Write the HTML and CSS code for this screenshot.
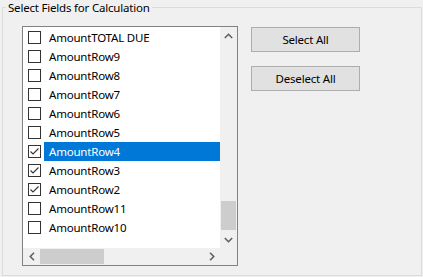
FILE: index.html
```html
<!DOCTYPE html>
<html lang="en">
<head>
    <meta charset="UTF-8">
    <title>Select Fields for Calculation</title>
    <link rel="stylesheet" href="styles.css">
</head>
<body>
    <fieldset class="group">
        <legend class="group-title">Select Fields for Calculation</legend>
        <div class="group-body">
            <div class="listbox">
                <ul class="items">
                    <li class="item"><span class="check"></span><span class="label">AmountTOTAL DUE</span></li>
                    <li class="item"><span class="check"></span><span class="label">AmountRow9</span></li>
                    <li class="item"><span class="check"></span><span class="label">AmountRow8</span></li>
                    <li class="item"><span class="check"></span><span class="label">AmountRow7</span></li>
                    <li class="item"><span class="check"></span><span class="label">AmountRow6</span></li>
                    <li class="item"><span class="check"></span><span class="label">AmountRow5</span></li>
                    <li class="item selected"><span class="check checked"><svg width="11" height="11" viewBox="0 0 11 11"><polyline points="1.5,5.5 4,8 9.5,2.5" /></svg></span><span class="label">AmountRow4</span></li>
                    <li class="item"><span class="check checked"><svg width="11" height="11" viewBox="0 0 11 11"><polyline points="1.5,5.5 4,8 9.5,2.5" /></svg></span><span class="label">AmountRow3</span></li>
                    <li class="item"><span class="check checked"><svg width="11" height="11" viewBox="0 0 11 11"><polyline points="1.5,5.5 4,8 9.5,2.5" /></svg></span><span class="label">AmountRow2</span></li>
                    <li class="item"><span class="check"></span><span class="label">AmountRow11</span></li>
                    <li class="item"><span class="check"></span><span class="label">AmountRow10</span></li>
                </ul>
                <div class="vscroll">
                    <span class="arrow"><svg width="9" height="6" viewBox="0 0 9 6"><polyline points="0.8,5 4.5,1.3 8.2,5" /></svg></span>
                    <span class="track"><span class="thumb"></span></span>
                    <span class="arrow"><svg width="9" height="6" viewBox="0 0 9 6"><polyline points="0.8,1 4.5,4.7 8.2,1" /></svg></span>
                </div>
                <div class="hscroll">
                    <span class="arrow"><svg width="6" height="9" viewBox="0 0 6 9"><polyline points="5,0.8 1.3,4.5 5,8.2" /></svg></span>
                    <span class="track"><span class="thumb"></span></span>
                    <span class="arrow"><svg width="6" height="9" viewBox="0 0 6 9"><polyline points="1,0.8 4.7,4.5 1,8.2" /></svg></span>
                </div>
                <div class="corner"></div>
            </div>
            <div class="actions">
                <button type="button">Select All</button>
                <button type="button">Deselect All</button>
            </div>
        </div>
    </fieldset>
</body>
</html>
```

FILE: styles.css
```css
body {
    margin: 0;
    background-color: #f0f0f0;
    font-family: "Noto Sans", Arial, sans-serif;
    font-size: 11.5px;
    letter-spacing: -0.2px;
    color: #000;
}
.group {
    box-sizing: border-box;
    height: 276px;
    margin: 0 1px 1px 2px;
    padding: 0;
    border: 1px solid #dcdcdc;
}
.group-title {
    margin-left: 3px;
    padding: 0 2px;
    line-height: 15px;
}
.group-body {
    display: flex;
    align-items: flex-start;
    gap: 13px;
    padding: 11px 0 0 19px;
}
.listbox {
    display: grid;
    grid-template-columns: 197px 17px;
    grid-template-rows: 221px 17px;
    border: 1px solid #828282;
    background: #fff;
}
.items {
    list-style: none;
    margin: 0;
    padding: 1px 0 0 0;
    overflow: hidden;
}
.item {
    display: flex;
    align-items: center;
    height: 19px;
}
.check {
    box-sizing: border-box;
    display: flex;
    align-items: center;
    justify-content: center;
    width: 13px;
    height: 13px;
    margin: 0 3px 0 5px;
    border: 1px solid #333;
    background: #fff;
}
.check svg polyline {
    fill: none;
    stroke: #333;
    stroke-width: 1.1;
}
.label {
    flex: 1;
    height: 19px;
    line-height: 19px;
    padding-left: 5px;
    white-space: nowrap;
}
.selected .label {
    background-color: #0078d7;
    color: #fff;
}
.vscroll, .hscroll, .corner {
    background: #f0f0f0;
    display: flex;
}
.vscroll {
    flex-direction: column;
}
.arrow {
    display: flex;
    align-items: center;
    justify-content: center;
    width: 17px;
    height: 17px;
    flex: none;
}
.arrow svg polyline {
    fill: none;
    stroke: #606060;
    stroke-width: 1.6;
}
.track {
    flex: 1;
    display: flex;
}
.vscroll .track {
    flex-direction: column;
}
.vscroll .thumb {
    height: 29px;
    margin: auto 1px 1px 1px;
    background: #cdcdcd;
}
.hscroll .thumb {
    width: 64px;
    margin: 1px 0;
    background: #cdcdcd;
}
.actions {
    display: flex;
    flex-direction: column;
    gap: 14px;
    margin-top: 1px;
}
button {
    width: 109px;
    height: 25px;
    padding: 0;
    border: 1px solid #adadad;
    background-color: #e1e1e1;
    font-family: inherit;
    font-size: 11.5px;
    letter-spacing: -0.2px;
    color: #000;
}
```
